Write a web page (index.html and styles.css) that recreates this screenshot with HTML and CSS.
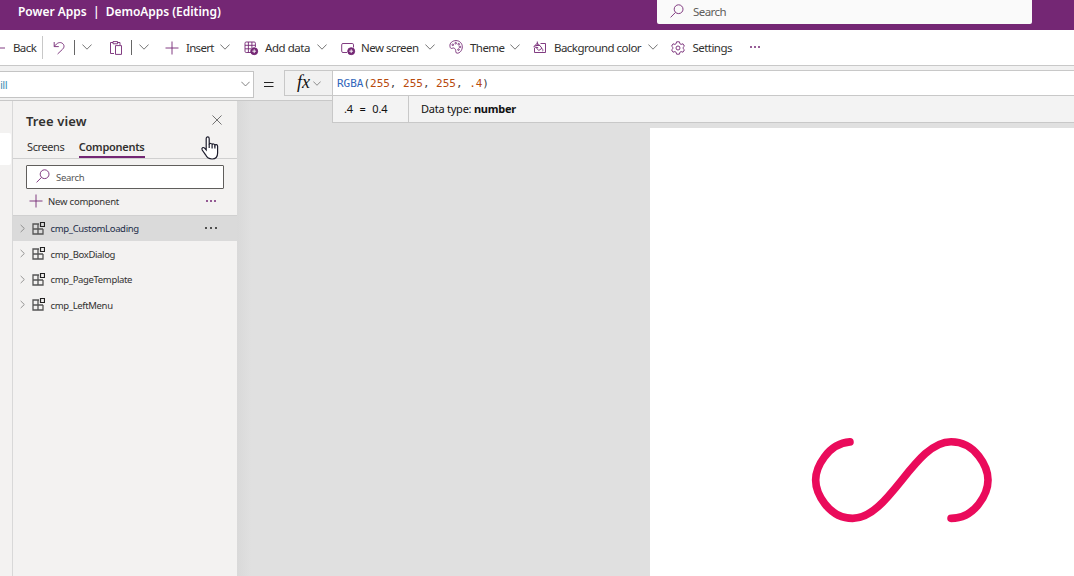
FILE: index.html
```html
<!DOCTYPE html>
<html lang="en">
<head>
<meta charset="utf-8">
<title>Power Apps</title>
<link rel="stylesheet" href="styles.css">
</head>
<body>
<svg class="defs" aria-hidden="true">
  <symbol id="chev" viewBox="0 0 10 6"><path d="M.4.5 5 5.2 9.6.5"/></symbol>
  <symbol id="right" viewBox="0 0 6 10"><path d="M.8.7 5.2 5 .8 9.3"/></symbol>
  <symbol id="plus" viewBox="0 0 14 14"><path d="M7 .5v13M.5 7h13"/></symbol>
  <symbol id="search" viewBox="0 0 14 14"><circle cx="8.6" cy="5.2" r="4.4"/><path d="M5.5 8.4.6 13.4"/></symbol>
  <symbol id="comp" viewBox="0 0 13 13"><path d="M7 2H1v10h10V7M1 7h10M6 2v10" stroke="#555" stroke-width="1.3"/><path d="M8.500.5h4v4h-4z" stroke="#222" stroke-width="1.2"/></symbol>
</svg>
<header class="top">
  <div class="title">Power Apps<span class="bar">|</span>DemoApps (Editing)</div>
  <div class="topsearch"><svg class="s14"><use href="#search"/></svg><span>Search</span></div>
</header>
<nav class="tools">
  <svg class="back" viewBox="0 0 6 14"><path d="M0 7h5"/></svg>
  <span class="t-back">Back</span>
  <i class="rule tall"></i>
  <svg class="s14" viewBox="0 0 14 14"><path d="M2.2 1v4.6h4.6M2.4 5.4C5 1.6 8 .8 10.2 2.2c2.6 1.8 2.1 4.4.4 6L5.6 13"/></svg>
  <i class="rule"></i>
  <svg class="chev"><use href="#chev"/></svg>
  <svg class="s14" viewBox="0 0 14 14"><path d="M5 12.5H1.5v-11H4M8.500 1.500H11V4M4 .6h4.600v2.200H4zM6.500 4.600h6v8.800h-6z"/></svg>
  <i class="rule"></i>
  <svg class="chev"><use href="#chev"/></svg>
  <svg class="s14"><use href="#plus"/></svg>
  <span class="t-insert">Insert</span>
  <svg class="chev"><use href="#chev"/></svg>
  <svg class="s14" viewBox="0 0 14 14"><path d="M7 11.500H2.200a1.200 1.200 0 0 1-1.200-1.200V2.200A1.200 1.200 0 0 1 2.200 1h8a1.200 1.200 0 0 1 1.200 1.200V6M1 4.300h10.400M1 7.800h6M4.400 1v10.500M7.900 1v6"/><circle class="solid" cx="10.200" cy="10.200" r="3.500"/><path class="white" d="M10.200 8.300v3.800M8.300 10.200h3.800"/></svg>
  <span class="t-data">Add data</span>
  <svg class="chev"><use href="#chev"/></svg>
  <svg class="s14" viewBox="0 0 14 14"><path d="M6 11.500H2A1.300 1.300 0 0 1 .700 10.200V3.800A1.300 1.300 0 0 1 2 2.500h9.200a1.300 1.300 0 0 1 1.300 1.300V6.500"/><circle class="solid" cx="10.200" cy="10.200" r="3.500"/><path class="white" d="M10.200 8.300v3.800M8.300 10.200h3.800"/></svg>
  <span class="t-screen">New screen</span>
  <svg class="chev"><use href="#chev"/></svg>
  <svg class="s14 up" viewBox="0 0 14 14"><path d="M1 6.500C.3 3 3.500.6 7 .6s6.300 2.700 6.300 6.200-2.500 6.400-5 6.400c-2.300 0-1-2.500-2-4C5.300 7.700 4.400 7.800 3.200 8.300 2 8.800 1.200 8 1 6.500z"/><circle cx="3.800" cy="4.800" r=".8"/><circle cx="6.700" cy="3.200" r=".8"/><circle cx="9.700" cy="4.200" r=".8"/><circle cx="10.900" cy="6.900" r=".8"/><circle cx="9.500" cy="9.600" r=".8"/></svg>
  <span class="t-theme">Theme</span>
  <svg class="chev"><use href="#chev"/></svg>
  <svg class="s14" viewBox="0 0 14 14"><path d="M7.500 2.500H12.500v9H1.500V7M4.300.500v4M4.300 2.200.7 5.700l4.500 1M2.300 4.500h4.500L9 7.300 5.700 9.500 2.700 6M4.300 2.200l3 2.800"/><path d="M9 7.500c1.200 1.300 1.200 2.300.3 2.700"/></svg>
  <span class="t-bg">Background color</span>
  <svg class="chev"><use href="#chev"/></svg>
  <svg class="s14" viewBox="0 0 14 14"><path d="M5.600.8h2.800l.5 1.900 1.200.7 1.900-.6 1.400 2.400L12 6.500v1l1.400 1.300-1.400 2.400-1.900-.6-1.200.7-.5 1.900H5.600l-.5-1.900-1.200-.7-1.900.6L.6 8.800 2 7.500v-1L.6 5.200 2 2.800l1.900.6 1.200-.7z"/><circle cx="7" cy="7" r="2"/></svg>
  <span class="t-set">Settings</span>
  <span class="dots"><i></i><i></i><i></i></span>
</nav>
<section class="formula">
  <div class="prop"><span>ill</span><svg class="chev"><use href="#chev"/></svg></div>
  <svg class="equals" viewBox="0 0 10 8"><path d="M0 1.500h9.500M0 5.500h9.500"/></svg>
  <div class="fx"><em>fx</em><svg class="chev"><use href="#chev"/></svg></div>
  <div class="editor">
    <code><b class="fn">RGBA</b>(<b>255</b>, <b>255</b>, <b>255</b>, <b>.4</b>)</code>
    <div class="result"><span class="value">.4 &nbsp;=&nbsp; 0.4</span><span class="type">Data type: <strong>number</strong></span></div>
  </div>
</section>
<main class="work">
  <div class="rail"><i></i></div>
  <aside class="tree">
    <div class="head"><h2>Tree view</h2><svg class="close" viewBox="0 0 11 11"><path d="m.5.5 10 10m0-10-10 10"/></svg></div>
    <div class="tabs"><span class="screens">Screens</span><span class="on">Components</span></div>
    <div class="find"><svg class="s14"><use href="#search"/></svg><span>Search</span></div>
    <div class="new"><svg class="s14"><use href="#plus"/></svg><span>New component</span><span class="dots"><i></i><i></i><i></i></span></div>
    <ul>
      <li class="sel"><svg class="right"><use href="#right"/></svg><svg class="comp"><use href="#comp"/></svg><span>cmp_CustomLoading</span><span class="dots"><i></i><i></i><i></i></span></li>
      <li><svg class="right"><use href="#right"/></svg><svg class="comp"><use href="#comp"/></svg><span>cmp_BoxDialog</span></li>
      <li><svg class="right"><use href="#right"/></svg><svg class="comp"><use href="#comp"/></svg><span>cmp_PageTemplate</span></li>
      <li><svg class="right"><use href="#right"/></svg><svg class="comp"><use href="#comp"/></svg><span>cmp_LeftMenu</span></li>
    </ul>
  </aside>
  <div class="stage"><div class="canvas">
    <svg class="loader" viewBox="1 27 96.080 45.950"><path d="M22.900 30.100C11.200 31 5 43.500 5 50s6.400 20 19.300 20c19.300 0 32.100-40 51.400-40C88.600 30 95 43.300 95 50s-6.400 20-19.300 20"/></svg>
  </div></div>
</main>
<svg class="cursor" viewBox="0 0 18 24"><path d="M5.200 14V2.800C5.200.3 8.200.3 8.200 2.800v5.700c.2-1.500 2.700-1.300 2.900.3.300-1.300 2.500-1 2.800.5.500-1.200 2.700-.8 2.700 1V17c0 3.500-2 6-5.500 6-4 0-5.300-1.700-6.500-4.200L1.200 14c-1-2 1-3.300 2.400-1.800z"/><path d="M8.200 8v4M11.100 9v3.500M13.900 9.500v3"/></svg>
</body>
</html>
```
FILE: styles.css
```css
* { box-sizing: border-box; }
body { margin: 0; width: 1074px; height: 576px; overflow: hidden; display: flex; flex-direction: column; background: #f3f2f1; color: #323130; font-family: "Noto Sans", "Open Sans", sans-serif; font-size: 11.5px; position: relative; white-space: nowrap; }
svg { display: block; fill: none; stroke: #742774; stroke-width: .9; flex: none; overflow: visible; }
.defs { position: absolute; width: 0; height: 0; }
.s14 { width: 14px; height: 14px; }
.chev { width: 10px; height: 6px; stroke: #666; }
.top { height: 30px; background: #742774; display: flex; flex: none; justify-content: space-between; padding: 0 42px 0 18px; }
.title { color: #fff; font-weight: 600; font-size: 12px; line-height: 24px; letter-spacing: -.03px; }
.bar { margin: 0 6px 0 6.5px; }
.topsearch { width: 375px; height: 24px; background: #fafafa; border-radius: 0 0 2px 2px; display: flex; align-items: center; gap: 9px; padding: 0 0 1px 13px; color: #605e5c; }
.topsearch span { letter-spacing: -.55px; }
.topsearch svg { margin-top: -1px; }
.tools { height: 36px; flex: none; background: #fff; border-bottom: 1px solid #c8c8c8; display: grid; align-items: center; grid-template-columns: 13px 29px 10px 22px 8px 27px 22px 8px 26px 21px 34px 24px 21px 52px 24px 20px 64px 24px 21px 40px 23px 21px 94px 23px 21px 58px 1fr; }
.tools .chev { margin-top: -2px; }
.back { width: 6px; height: 14px; }
.up { margin-top: -2px; }
.rule { width: 1px; height: 15px; background: #666; }
.tall { height: 23px; background: #c8c8c8; }
.solid { fill: #742774; }
.white { stroke: #fff; }
.dots { display: flex; gap: 2px; }
.dots i { width: 2px; height: 2px; border-radius: 1px; background: #742774; }
.tools .dots { margin-top: -1px; }
.t-back { letter-spacing: -.6px; }
.t-insert { letter-spacing: -.7px; }
.t-data { letter-spacing: -.45px; }
.t-screen { letter-spacing: -.5px; }
.t-theme, .t-set { letter-spacing: -.55px; }
.t-set { padding-left: .5px; }
.t-bg { letter-spacing: -.53px; }
.formula { height: 35px; flex: none; display: flex; border-bottom: 1px solid #c8c8c8; background: #f1f1f1; position: relative; z-index: 1; }
.prop { width: 254px; flex: none; height: 27px; margin-top: 5px; background: #fff; border: 1px solid #c4c4c4; border-left: 0; display: flex; justify-content: space-between; align-items: center; padding-right: 3px; color: #4994b5; letter-spacing: -.6px; }
.prop .chev { width: 9px; margin-top: -1px; }
.equals { width: 10px; height: 8px; margin: 15px 10px 0; stroke: #222; stroke-width: 1; }
.fx { width: 48px; flex: none; height: 26px; margin-top: 4px; border: 1px solid #c8c8c8; border-right: 0; display: flex; align-items: center; gap: 3px; padding-left: 12px; }
.fx em { font: italic 18px/20px "Liberation Serif", serif; color: #111; width: 13px; margin-top: -2px; }
.fx .chev { width: 8px; height: 5px; }
.editor { flex: none; margin-top: 4px; height: 53px; border: 1px solid #c8c8c8; border-right: 0; background: #f3f3f3; width: 742px; }
.editor code { display: block; height: 25px; border-bottom: 1px solid #c8c8c8; background: #fff; font: 11px/25px "DejaVu Sans Mono", monospace; padding-left: 4px; color: #444; letter-spacing: -.02px; }
.editor b { font-weight: 400; color: #b84a0c; }
.editor .fn { color: #3165bb; }
.result { height: 26px; display: flex; font-size: 11px; line-height: 26px; color: #111; }
.value { width: 76px; padding-left: 11px; border-right: 1px solid #c8c8c8; word-spacing: .7px; letter-spacing: -.2px; }
.type { padding-left: 12px; letter-spacing: -.24px; }
.work { flex: 1; display: flex; min-height: 0; }
.rail { width: 13px; border-right: 1px solid #d8d8d8; padding-top: 32px; }
.rail i { display: block; width: 11px; height: 32px; background: #fff; border-radius: 0 2px 2px 0; }
.tree { width: 224px; background: #f3f2f1; display: flex; flex-direction: column; }
.head { height: 38px; display: flex; justify-content: space-between; padding: 9px 15px 0 13px; }
h2 { margin: 0; font-size: 13px; line-height: 22px; font-weight: 600; letter-spacing: .12px; }
.close { width: 10px; height: 10px; margin-top: 5px; stroke: #555; }
.tabs { height: 20px; border-bottom: 1px solid #d0d0d0; display: flex; gap: 14.5px; padding-left: 14px; font-size: 11px; line-height: 16px; }
.screens { letter-spacing: -.4px; }
.tabs .on { font-weight: 600; height: 19px; border-bottom: 2px solid #742774; letter-spacing: -.27px; }
.find { height: 24px; width: 198px; margin: 6px 0 0 13px; background: #fff; border: 1px solid #605e5c; border-radius: 1px; display: flex; align-items: center; gap: 6px; padding-left: 9px; font-size: 9.5px; letter-spacing: -.3px; color: #555; }
.find svg { margin-top: -2px; }
.new { height: 26px; display: flex; align-items: center; padding: 0 21px 2px 16px; font-size: 9.5px; letter-spacing: -.2px; }
.new span:not(.dots) { margin-left: 5px; }
.new .dots, li .dots { margin-left: auto; }
ul { list-style: none; margin: 0; padding: 0; font-size: 9.5px; letter-spacing: -.34px; }
li { height: 25.600px; display: flex; align-items: center; padding: 1px 20px 0 7px; }
.sel { background: #dadada; border-top: 1px solid #d0d0d0; height: 26px; color: #222d49; padding-top: 0; }
.sel .dots { gap: 3px; margin-top: -2px; }
.sel .dots i { background: #222; }
.right { width: 5px; height: 9px; stroke: #777; margin: -1px 7px 0 0; }
.comp { width: 13px; height: 13px; margin: -1px 5px 0 0; }
li span:not(.dots) { padding-left: .5px; }
.stage { flex: 1; background: linear-gradient(90deg, #d9d9d9, #e0e0e0 14px); padding: 27px 0 0 413px; }
.canvas { height: 100%; background: #fff; padding: 308px 0 0 158px; }
.loader { width: 184px; height: 88px; stroke: #ea0b5b; stroke-width: 4; stroke-linecap: round; }
.cursor { position: absolute; left: 201px; top: 136px; width: 18px; height: 24px; fill: #fff; stroke: #1c1c2c; stroke-width: 1.200; }
```
